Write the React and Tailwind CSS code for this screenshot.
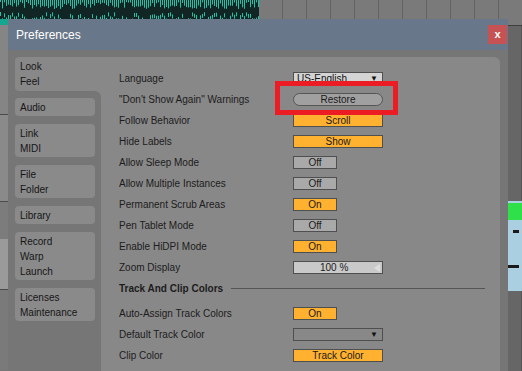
import React from 'react';

const font = { fontFamily: '"Liberation Sans", Arial, sans-serif' };

const waveBars = Array.from({ length: 140 }, (_, i) => {
  const a = Math.abs(Math.sin(i * 12.9898) * 43758.5453) % 1;
  const b = Math.abs(Math.sin(i * 78.233) * 12345.678) % 1;
  return { x: i * 2, top: 2 + a * 7, bot: 12 + b * 9 };
});

const Waveform = () => (
  <svg width="280" height="25" className="block">
    <rect width="280" height="25" fill="#112624" />
    {waveBars.map((b) => (
      <g key={b.x}>
        <line x1={b.x + 0.5} x2={b.x + 0.5} y1={0} y2={b.top} stroke="#1fc3a7" strokeWidth="1" />
        <line x1={b.x + 0.5} x2={b.x + 0.5} y1={b.bot} y2={b.bot + 4} stroke="#1fc3a7" strokeWidth="1" />
      </g>
    ))}
  </svg>
);

const tabHeights = { 1: 'h-[18px]', 2: 'h-[33px]', 3: 'h-[48px]' };

const Tab = ({ lines }) => (
  <div
    className={`flex w-[80px] flex-col justify-center rounded-[4px] bg-[#8a8a8a] px-[5px] text-[10px] leading-[15px] text-[#161616] ${
      tabHeights[lines.length]
    }`}
  >
    {lines.map((l) => (
      <div key={l}>{l}</div>
    ))}
  </div>
);

const Toggle = ({ on, label, wide }) => (
  <div
    className={`flex h-[13px] items-center justify-center border border-[#4f4f4f] text-[10px] leading-none text-[#1a1a1a] ${
      wide ? 'w-[90px]' : 'w-[44px]'
    } ${on ? 'bg-[#ffb12f]' : 'bg-[#a9a9a9]'}`}
  >
    {label}
  </div>
);

const Dropdown = ({ value, light }) => (
  <div
    className={`flex h-[13px] w-[90px] items-center justify-between border border-[#4f4f4f] pl-[3px] pr-[4px] text-[10px] leading-none text-[#111] ${
      light ? 'bg-[#d4d4d4]' : 'bg-[#888888]'
    }`}
  >
    <span>{value}</span>
    <span className="text-[8px]">▼</span>
  </div>
);

const Restore = () => (
  <div className="flex h-[13px] w-[90px] items-center justify-center rounded-full border border-[#555] bg-[#a0a0a0] text-[10px] leading-none text-[#1a1a1a]">
    Restore
  </div>
);

const ZoomSlider = () => (
  <div className="flex h-[13px] w-[90px] items-center justify-between border border-[#4f4f4f] bg-[#c9c9c9] pl-[26px] pr-[2px] text-[10px] leading-none text-[#1a1a1a]">
    <span>100 %</span>
    <svg width="6" height="8">
      <polygon points="6,0 6,8 0,4" fill="#dedede" />
    </svg>
  </div>
);

const Row = ({ label, children }) => (
  <div className="flex h-[21px] items-center">
    <div className="w-[192px] pl-[18px] text-[10px] text-[#1c1c1c]">{label}</div>
    {children}
  </div>
);

export default function App() {
  return (
    <div className="relative h-[371px] w-[522px] overflow-hidden bg-[#777777]" style={font}>
      {/* background strip */}
      <div className="flex h-[19px]">
        <div className="h-[19px] w-[280px] overflow-hidden">
          <Waveform />
        </div>
        <div className="flex h-[19px] flex-1 bg-[#7a7a7a] pl-[23px]">
          {Array.from({ length: 10 }, (_, i) => (
            <div key={i} className="h-full w-[24px] border-l border-[#636363]" />
          ))}
        </div>
      </div>

      <div className="flex">
        {/* left background sliver */}
        <div className="flex w-[8px] flex-col">
          <div className="h-[6px] bg-[#16a58f]" />
          <div className="h-[90px] border-b border-[#4a4a4a] bg-[#858585]" />
          <div className="h-[87px] border-b border-[#4a4a4a] bg-[#8a8a8a]" />
          <div className="h-[37px] bg-[#7c7c7c]" />
          <div className="h-[51px] border-b border-[#4a4a4a] bg-[#9a9a9a]" />
          <div className="h-[80px] bg-[#7a7a7a]" />
        </div>

        {/* dialog */}
        <div className="flex w-[500px] flex-col">
          <div className="flex h-[31px] items-center justify-between bg-[#687789] pl-[8px] pr-[1px]">
            <span className="text-[12px] text-white">Preferences</span>
            <div className="flex h-[19px] w-[19px] items-center justify-center bg-[#c65253] text-[11px] font-bold leading-none text-white">
              x
            </div>
          </div>
          <div className="flex h-[330px] bg-[#767676] pl-[7px] pr-[8px] pt-[7px]">
            {/* nav */}
            <div className="flex w-[86px] flex-col">
              <div className="flex h-[34px] flex-col justify-center rounded-l-[4px] bg-[#888888] px-[5px] text-[10px] leading-[15px] text-[#161616]">
                <div>Look</div>
                <div>Feel</div>
              </div>
              <div className="flex-1 bg-[#888888]">
                <div className="flex h-full flex-col gap-[8px] rounded-tr-[6px] bg-[#767676] pt-[7px]">
                  <Tab lines={['Audio']} />
                  <Tab lines={['Link', 'MIDI']} />
                  <Tab lines={['File', 'Folder']} />
                  <Tab lines={['Library']} />
                  <Tab lines={['Record', 'Warp', 'Launch']} />
                  <Tab lines={['Licenses', 'Maintenance']} />
                </div>
              </div>
            </div>

            {/* panel */}
            <div className="flex-1 rounded-tr-[6px] bg-[#888888] pt-[11px]">
              <Row label="Language">
                <Dropdown value="US-English" light />
              </Row>
              <Row label={'"Don\'t Show Again" Warnings'}>
                <Restore />
              </Row>
              <Row label="Follow Behavior">
                <Toggle on wide label="Scroll" />
              </Row>
              <Row label="Hide Labels">
                <Toggle on wide label="Show" />
              </Row>
              <Row label="Allow Sleep Mode">
                <Toggle label="Off" />
              </Row>
              <Row label="Allow Multiple Instances">
                <Toggle label="Off" />
              </Row>
              <Row label="Permanent Scrub Areas">
                <Toggle on label="On" />
              </Row>
              <Row label="Pen Tablet Mode">
                <Toggle label="Off" />
              </Row>
              <Row label="Enable HiDPI Mode">
                <Toggle on label="On" />
              </Row>
              <Row label="Zoom Display">
                <ZoomSlider />
              </Row>
              <div className="mb-[4px] flex h-[21px] items-center pl-[18px] pr-[15px]">
                <span className="text-[10px] font-bold text-[#1c1c1c]">Track And Clip Colors</span>
                <div className="ml-[8px] h-px flex-1 bg-[#555555]" />
              </div>
              <Row label="Auto-Assign Track Colors">
                <Toggle on label="On" />
              </Row>
              <Row label="Default Track Color">
                <Dropdown value="" />
              </Row>
              <Row label="Clip Color">
                <Toggle on wide label="Track Color" />
              </Row>
            </div>
          </div>
        </div>

        {/* right background sliver */}
        <div className="flex flex-1 flex-col">
          <div className="h-[7px] border-b border-[#3e3e3e] bg-[#7a7a7a]" />
          <div className="h-[175px] border-r border-[#555] bg-[#666666]" />
          <div className="flex h-[90px] flex-col bg-[#a9cfe0]">
            <div className="mt-[2px] h-[17px] bg-[#2fe04b]" />
            <div className="ml-[5px] mt-[10px] h-[3px] w-[6px] bg-[#1a1a1a]" />
            <div className="mt-[32px] h-[3px] w-[11px] bg-[#1a1a1a]" />
          </div>
          <div className="flex-1 border-r border-[#555] bg-[#666666]" />
        </div>
      </div>

      {/* annotation overlay */}
      <div className="absolute left-[275px] top-[81px] h-[34px] w-[123px] border-[5px] border-[#ec1c24]" />
    </div>
  );
}
